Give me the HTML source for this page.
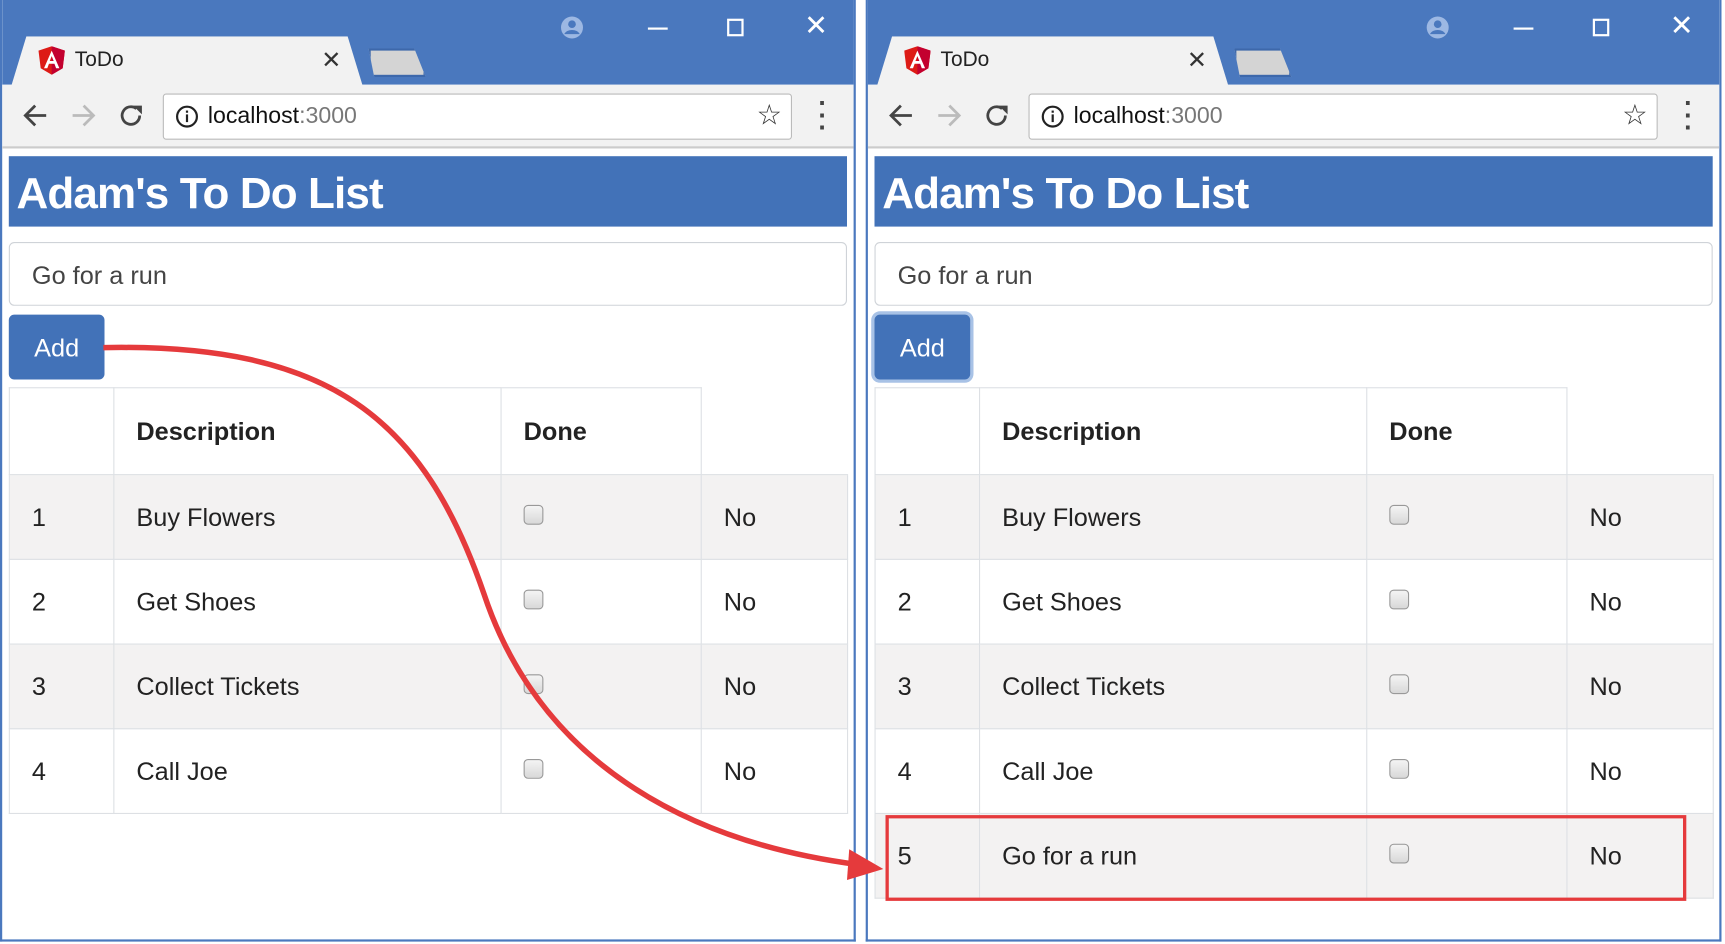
<!DOCTYPE html>
<html><head><meta charset="utf-8"><style>
*{margin:0;padding:0;box-sizing:border-box}
html,body{width:1725px;height:944px;overflow:hidden;background:#fff}
#s{position:absolute;left:0;top:0;width:1568px;height:858px;transform:scale(1.1);transform-origin:0 0;font-family:"Liberation Sans",sans-serif}
.w{position:absolute;top:0;width:778px;height:856px;border:2px solid #4a78be;border-top:none;background:#fff;overflow:hidden}
.tb{position:absolute;left:0;top:0;right:0;height:77px;background:#4a78be}
.tab{position:absolute;left:8px;top:33px;width:320px;height:46px;background:#f2f2f2;clip-path:polygon(0 100%,14px 0,306px 0,100% 100%)}
.tab2{position:absolute;left:333px;top:44px;width:52px;height:26px;background:#d4d4d4;border:2px solid #3d68ab;clip-path:polygon(0 0,80% 0,100% 100%,10% 100%);}
.tt{position:absolute;left:66px;top:44px;font-size:19px;color:#222}
.tx{position:absolute;left:290px;top:42px;font-size:22px;color:#333}
.bar{position:absolute;left:0;right:0;top:77px;height:58px;background:#f2f2f2;border-bottom:2px solid #ccc}
.addr{position:absolute;left:146px;top:8px;width:572px;height:42px;background:#fff;border:1px solid #bbb;border-radius:3px}
.url{position:absolute;left:40px;top:8px;font-size:21px;color:#111}
.url span{color:#777}
.h{position:absolute;left:6px;top:142px;width:762px;height:64px;background:#4272b8;color:#fff;font-weight:bold;font-size:40px;padding:12px 0 0 7px;letter-spacing:-0.8px}
.in{position:absolute;left:6px;top:220px;width:762px;height:58px;border:1px solid #cfd3d8;border-radius:5px;font-size:23px;color:#444;padding:16px 0 0 20px}
.btn{position:absolute;left:6px;top:286px;width:87px;height:59px;background:#4272b8;border-radius:5px;color:#fff;font-size:23px;text-align:center;padding-top:17px}
table{position:absolute;left:6px;top:352px;border-collapse:collapse;font-size:23px;color:#222}
td{border:1.5px solid #dde0e4;height:77px;vertical-align:middle;padding-left:20px}
tr.o td{background:#f3f2f2}
th{height:79px;border:1.5px solid #dde0e4;text-align:left;padding-left:20px;font-size:23px}
th.n{border:none;border-bottom:1.5px solid #dde0e4}
.cb{display:inline-block;width:18px;height:18px;border:1.5px solid #999;border-radius:4px;background:linear-gradient(#f4f4f4,#d8d8d8);vertical-align:middle;margin-top:-6px}
.ico{position:absolute;color:#fff}
</style></head><body><div id="s">

<!-- LEFT WINDOW -->
<div class="w" style="left:0">
 <div class="tb"></div>
 <div class="tab"></div><div class="tab2"></div>
 <svg style="position:absolute;left:33px;top:42px" width="24" height="26" viewBox="0 0 24 26"><path d="M12 0L0 4l2 16 10 6 10-6 2-16z" fill="#dd1b16"/><path d="M12 0v26l10-6 2-16z" fill="#c3002f"/><path d="M12 4L5 20h3l1.5-4h5l1.5 4h3zm-1.8 9.5L12 9l1.8 4.5z" fill="#fff"/></svg>
 <div class="tt">ToDo</div><div class="tx">✕</div>
 <svg class="ico" style="left:507px;top:14px" width="22" height="22"><circle cx="11" cy="11" r="10" fill="#9db8e3"/><circle cx="11" cy="8" r="3.5" fill="#4a78be"/><path d="M4 17c2-5 12-5 14 0" fill="#4a78be"/></svg>
 <div style="position:absolute;left:587px;top:25px;width:18px;height:2px;background:#fff"></div>
 <div style="position:absolute;left:659px;top:17px;width:15px;height:16px;border:2px solid #fff"></div>
 <div class="ico" style="left:729px;top:8px;font-size:26px">✕</div>
 <div class="bar">
  <svg style="position:absolute;left:18px;top:16px" width="24" height="24"><path d="M22 12H4M12 3l-9 9 9 9" stroke="#444" stroke-width="2.5" fill="none"/></svg>
  <svg style="position:absolute;left:62px;top:16px" width="24" height="24"><path d="M2 12h18M12 3l9 9-9 9" stroke="#bbb" stroke-width="2.5" fill="none"/></svg>
  <svg style="position:absolute;left:106px;top:16px" width="24" height="24"><path d="M19 12a8 8 0 1 1-3-6.2" stroke="#444" stroke-width="2.5" fill="none"/><path d="M13 3h8v8z" fill="#444"/></svg>
  <div class="addr"><svg style="position:absolute;left:10px;top:9px" width="22" height="22"><circle cx="11" cy="11" r="9" stroke="#222" stroke-width="2" fill="none"/><rect x="10" y="9" width="2" height="7" fill="#222"/><rect x="10" y="5.5" width="2" height="2" fill="#222"/></svg><div class="url">localhost<span>:3000</span></div>
  <div style="position:absolute;right:8px;top:3px;font-size:26px;color:#333">☆</div></div>
  <div style="position:absolute;left:742px;top:12px;font-size:24px;color:#444;font-weight:bold;line-height:11px">·<br>·<br>·</div>
 </div>
 <div class="h">Adam's To Do List</div>
 <div class="in">Go for a run</div>
 <div class="btn">Add</div>
 <table>
  <tr><th style="width:95px"></th><th style="width:352px">Description</th><th style="width:182px">Done</th><th class="n" style="width:133px"></th></tr>
  <tr class="o"><td>1</td><td>Buy Flowers</td><td><span class="cb"></span></td><td>No</td></tr>
  <tr><td>2</td><td>Get Shoes</td><td><span class="cb"></span></td><td>No</td></tr>
  <tr class="o"><td>3</td><td>Collect Tickets</td><td><span class="cb"></span></td><td>No</td></tr>
  <tr><td>4</td><td>Call Joe</td><td><span class="cb"></span></td><td>No</td></tr>
 </table>
</div>

<!-- RIGHT WINDOW -->
<div class="w" style="left:787px">
 <div class="tb"></div>
 <div class="tab"></div><div class="tab2"></div>
 <svg style="position:absolute;left:33px;top:42px" width="24" height="26" viewBox="0 0 24 26"><path d="M12 0L0 4l2 16 10 6 10-6 2-16z" fill="#dd1b16"/><path d="M12 0v26l10-6 2-16z" fill="#c3002f"/><path d="M12 4L5 20h3l1.5-4h5l1.5 4h3zm-1.8 9.5L12 9l1.8 4.5z" fill="#fff"/></svg>
 <div class="tt">ToDo</div><div class="tx">✕</div>
 <svg class="ico" style="left:507px;top:14px" width="22" height="22"><circle cx="11" cy="11" r="10" fill="#9db8e3"/><circle cx="11" cy="8" r="3.5" fill="#4a78be"/><path d="M4 17c2-5 12-5 14 0" fill="#4a78be"/></svg>
 <div style="position:absolute;left:587px;top:25px;width:18px;height:2px;background:#fff"></div>
 <div style="position:absolute;left:659px;top:17px;width:15px;height:16px;border:2px solid #fff"></div>
 <div class="ico" style="left:729px;top:8px;font-size:26px">✕</div>
 <div class="bar">
  <svg style="position:absolute;left:18px;top:16px" width="24" height="24"><path d="M22 12H4M12 3l-9 9 9 9" stroke="#444" stroke-width="2.5" fill="none"/></svg>
  <svg style="position:absolute;left:62px;top:16px" width="24" height="24"><path d="M2 12h18M12 3l9 9-9 9" stroke="#bbb" stroke-width="2.5" fill="none"/></svg>
  <svg style="position:absolute;left:106px;top:16px" width="24" height="24"><path d="M19 12a8 8 0 1 1-3-6.2" stroke="#444" stroke-width="2.5" fill="none"/><path d="M13 3h8v8z" fill="#444"/></svg>
  <div class="addr"><svg style="position:absolute;left:10px;top:9px" width="22" height="22"><circle cx="11" cy="11" r="9" stroke="#222" stroke-width="2" fill="none"/><rect x="10" y="9" width="2" height="7" fill="#222"/><rect x="10" y="5.5" width="2" height="2" fill="#222"/></svg><div class="url">localhost<span>:3000</span></div>
  <div style="position:absolute;right:8px;top:3px;font-size:26px;color:#333">☆</div></div>
  <div style="position:absolute;left:742px;top:12px;font-size:24px;color:#444;font-weight:bold;line-height:11px">·<br>·<br>·</div>
 </div>
 <div class="h">Adam's To Do List</div>
 <div class="in">Go for a run</div>
 <div class="btn" style="box-shadow:0 0 0 3px #a8c2e6">Add</div>
 <table>
  <tr><th style="width:95px"></th><th style="width:352px">Description</th><th style="width:182px">Done</th><th class="n" style="width:133px"></th></tr>
  <tr class="o"><td>1</td><td>Buy Flowers</td><td><span class="cb"></span></td><td>No</td></tr>
  <tr><td>2</td><td>Get Shoes</td><td><span class="cb"></span></td><td>No</td></tr>
  <tr class="o"><td>3</td><td>Collect Tickets</td><td><span class="cb"></span></td><td>No</td></tr>
  <tr><td>4</td><td>Call Joe</td><td><span class="cb"></span></td><td>No</td></tr>
  <tr class="o"><td>5</td><td>Go for a run</td><td><span class="cb"></span></td><td>No</td></tr>
 </table>
 <div style="position:absolute;left:16px;top:741px;width:728px;height:78px;border:3px solid #e53a3c"></div>
</div>

<svg style="position:absolute;left:0;top:0" width="1568" height="858">
 <path d="M94 316 C300 312 385 380 440 540 C490 690 620 765 780 786" stroke="#e53a3c" stroke-width="5" fill="none"/>
 <path d="M772 772 L803 790 L770 800 Z" fill="#e53a3c"/>
</svg>
</div></body></html>
